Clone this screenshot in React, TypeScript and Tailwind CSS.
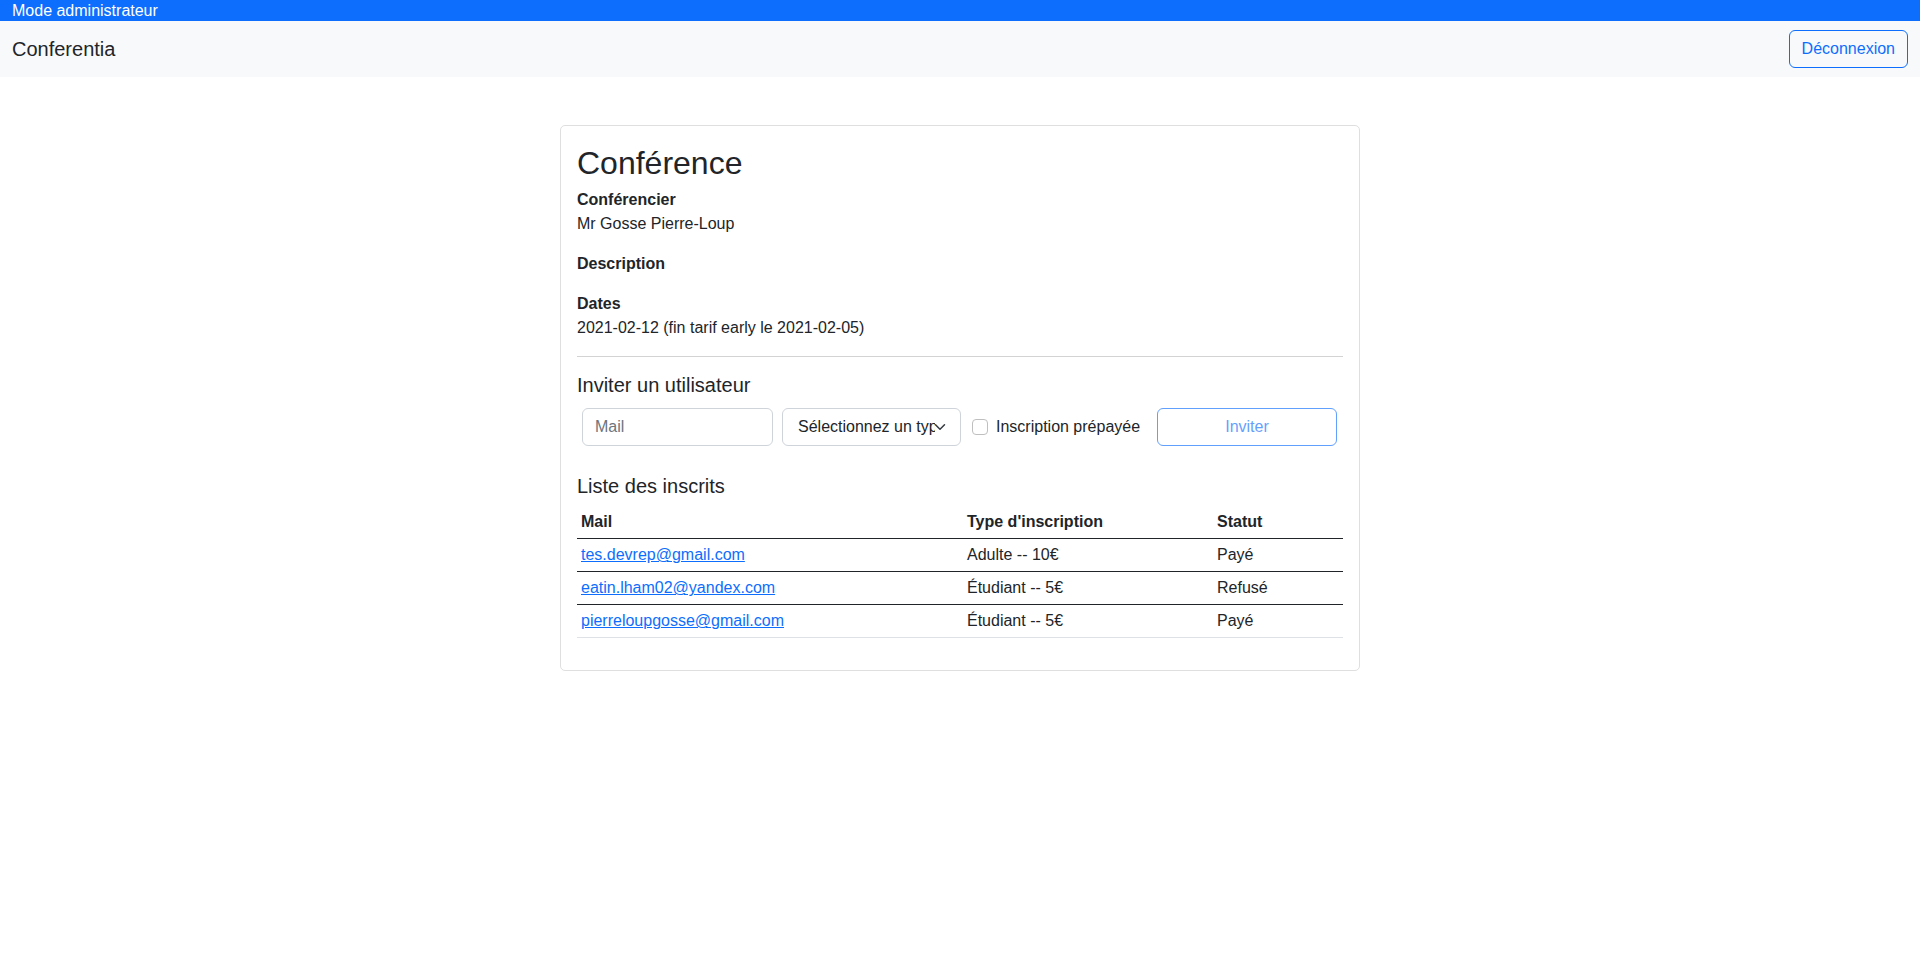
const inscrits = [
  { mail: 'tes.devrep@gmail.com', type: 'Adulte -- 10€', statut: 'Payé' },
  { mail: 'eatin.lham02@yandex.com', type: 'Étudiant -- 5€', statut: 'Refusé' },
  { mail: 'pierreloupgosse@gmail.com', type: 'Étudiant -- 5€', statut: 'Payé' },
];

export default function App() {
  return (
    <div className="min-h-screen bg-white font-['Liberation_Sans',Arial,sans-serif] text-base leading-6 text-[#212529]">
      {/* Admin banner */}
      <div className="h-[21px] bg-[#0d6efd] px-3 text-base leading-[21px] text-white">
        Mode administrateur
      </div>

      {/* Navbar */}
      <nav className="flex h-[56px] items-center justify-between bg-[#f8f9fa] px-3">
        <span className="text-[20px] leading-[30px] text-[#212529]">Conferentia</span>
        <button className="h-[38px] rounded-[6px] border border-[#0d6efd] px-3 text-base text-[#0d6efd]">
          Déconnexion
        </button>
      </nav>

      {/* Card */}
      <main className="mx-auto mt-12 w-[800px] rounded-[5px] border border-[#dfdfdf] p-4">
        <h2 className="mb-[6px] pt-[2px] text-[32px] leading-[1.2] font-medium">Conférence</h2>

        <div className="mb-4">
          <div className="font-bold">Conférencier</div>
          <div>Mr Gosse Pierre-Loup</div>
        </div>
        <div className="mb-4">
          <div className="font-bold">Description</div>
        </div>
        <div>
          <div className="font-bold">Dates</div>
          <div>2021-02-12 (fin tarif early le 2021-02-05)</div>
        </div>

        <hr className="my-4 border-t border-[#d3d3d3]" />

        <h5 className="mb-[11px] text-[20px] leading-[24px] font-medium">Inviter un utilisateur</h5>
        <div className="flex items-center">
          <input
            placeholder="Mail"
            className="ml-[5px] h-[38px] w-[191px] rounded-[6px] border border-[#ced4da] px-3 text-base placeholder:text-[#6c757d]"
          />
          <div className="relative ml-[9px] flex h-[38px] w-[179px] items-center rounded-[6px] border border-[#ced4da] pl-[15px] pr-[25px]">
            <span className="overflow-hidden whitespace-nowrap">Sélectionnez un type</span>
            <svg
              className="absolute right-[12px] top-1/2 -translate-y-1/2"
              width="16"
              height="12"
              viewBox="0 0 16 16"
              fill="none"
              stroke="#343a40"
              strokeWidth="2"
              strokeLinecap="round"
              strokeLinejoin="round">
              <path d="m2 5 6 6 6-6" />
            </svg>
          </div>
          <span className="ml-[11px] h-4 w-4 rounded-[4px] border border-[#bfbfbf] bg-white" />
          <label className="ml-2 whitespace-nowrap">Inscription prépayée</label>
          <button
            disabled
            className="ml-auto mr-[6px] h-[38px] w-[180px] rounded-[6px] border border-[#0d6efd] text-base text-[#0d6efd] opacity-[0.65]">
            Inviter
          </button>
        </div>

        <h5 className="mt-[28px] mb-2 text-[20px] leading-[24px] font-medium">Liste des inscrits</h5>
        <table className="mb-4 w-full border-collapse text-left">
          <thead>
            <tr className="border-b border-[#212529]">
              <th className="w-[386px] p-1 font-bold">Mail</th>
              <th className="w-[250px] p-1 font-bold">Type d'inscription</th>
              <th className="p-1 font-bold">Statut</th>
            </tr>
          </thead>
          <tbody>
            {inscrits.map((row, i) => (
              <tr
                key={row.mail}
                className={i < inscrits.length - 1 ? 'border-b border-[#212529]' : 'border-b border-[#dee2e6]'}>
                <td className="p-1">
                  <a href="#" className="text-[#0d6efd] underline">
                    {row.mail}
                  </a>
                </td>
                <td className="p-1">{row.type}</td>
                <td className="p-1">{row.statut}</td>
              </tr>
            ))}
          </tbody>
        </table>
      </main>
    </div>
  );
}
